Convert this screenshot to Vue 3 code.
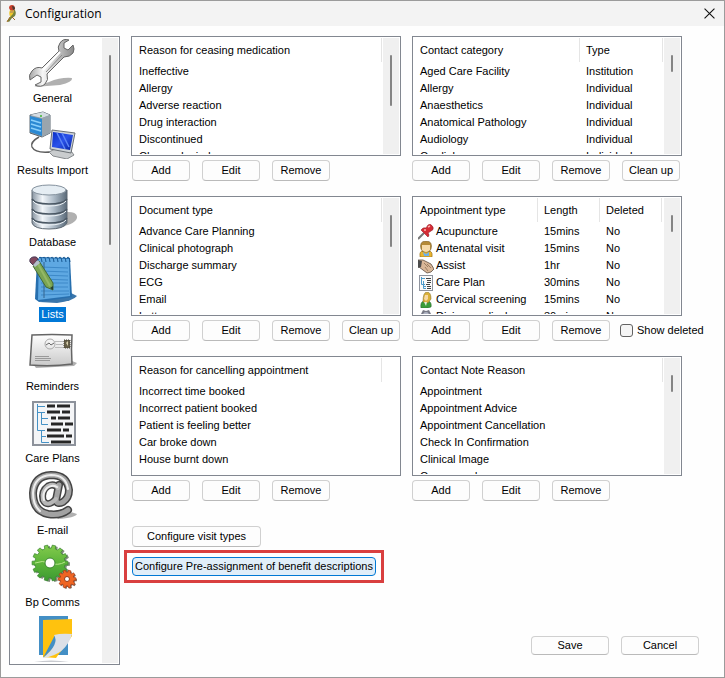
<script setup>
import { ref } from 'vue'

const selected = ref('Lists')
const showDeleted = ref(false)

const sections = ['General', 'Results Import', 'Database', 'Lists', 'Reminders', 'Care Plans', 'E-mail', 'Bp Comms']

const panels = [
  {
    columns: [{ label: 'Reason for ceasing medication', width: 249 }],
    rows: [['Ineffective'], ['Allergy'], ['Adverse reaction'], ['Drug interaction'], ['Discontinued'], ['Changed mind']],
    thumb: 51,
    actions: ['Add', 'Edit', 'Remove'],
  },
  {
    columns: [{ label: 'Contact category', width: 166 }, { label: 'Type', width: 83 }],
    rows: [
      ['Aged Care Facility', 'Institution'],
      ['Allergy', 'Individual'],
      ['Anaesthetics', 'Individual'],
      ['Anatomical Pathology', 'Individual'],
      ['Audiology', 'Individual'],
      ['Cardiology', 'Individual'],
    ],
    thumb: 17,
    actions: ['Add', 'Edit', 'Remove', 'Clean up'],
  },
  {
    columns: [{ label: 'Document type', width: 249 }],
    rows: [['Advance Care Planning'], ['Clinical photograph'], ['Discharge summary'], ['ECG'], ['Email'], ['Letter']],
    thumb: 32,
    actions: ['Add', 'Edit', 'Remove', 'Clean up'],
  },
  {
    columns: [{ label: 'Appointment type', width: 124 }, { label: 'Length', width: 62 }, { label: 'Deleted', width: 62 }],
    rows: [
      ['Acupuncture', '15mins', 'No'],
      ['Antenatal visit', '15mins', 'No'],
      ['Assist', '1hr', 'No'],
      ['Care Plan', '30mins', 'No'],
      ['Cervical screening', '15mins', 'No'],
      ['Diving medical', '30mins', 'No'],
    ],
    icons: ['pin', 'nurse', 'hands', 'plan', 'woman', 'diver'],
    thumb: 17,
    actions: ['Add', 'Edit', 'Remove'],
    deletedToggle: true,
  },
  {
    columns: [{ label: 'Reason for cancelling appointment', width: 249 }],
    rows: [['Incorrect time booked'], ['Incorrect patient booked'], ['Patient is feeling better'], ['Car broke down'], ['House burnt down']],
    thumb: 0,
    actions: ['Add', 'Edit', 'Remove'],
  },
  {
    columns: [{ label: 'Contact Note Reason', width: 249 }],
    rows: [['Appointment'], ['Appointment Advice'], ['Appointment Cancellation'], ['Check In Confirmation'], ['Clinical Image'], ['Correspondence']],
    thumb: 17,
    actions: ['Add', 'Edit', 'Remove'],
  },
]

// Outline of a toothed wheel centred on (cx, cy)
function gear(cx, cy, outer, inner, teeth) {
  const points = []
  for (let i = 0; i < teeth; i++) {
    const steps = [[-0.3, inner], [-0.22, outer], [0.22, outer], [0.3, inner]]
    for (const [offset, radius] of steps) {
      const angle = ((i + offset) / teeth) * Math.PI * 2
      points.push(`${(cx + Math.cos(angle) * radius).toFixed(1)},${(cy + Math.sin(angle) * radius).toFixed(1)}`)
    }
  }
  return points.join(' ')
}
const bigGear = gear(18, 18, 18, 15, 14)
const smallGear = gear(35, 34, 9, 7, 10)
</script>

<template>
  <div class="window">
    <header class="titlebar">
      <svg class="logo" viewBox="0 0 12 17" aria-hidden="true">
        <path d="M4 5L8 4Q10 7 8 11L5 13Q2 9 4 5Z" fill="#f0c92c" />
        <path d="M8 4Q11 7 9 11L6 13L3 17L1 16L5 11Q8 9 8 4Z" fill="#77823c" />
        <path d="M3 3Q3 0 6 0T9 4L7 6L4 5Z" fill="#c8402e" />
        <path d="M6 1Q9 1 9 4L7 5Z" fill="#4b3a34" />
        <path d="M4 6L8 5L7 8L4 8Z" fill="#c9a04c" />
        <path d="M4 12L1 17M6 12L9 15" stroke="#a26b25" fill="none" />
      </svg>
      <h1>Configuration</h1>
      <button class="close" type="button" aria-label="Close">
        <svg viewBox="0 0 10 10"><path d="M0.5 0.5L9.5 9.5M9.5 0.5L0.5 9.5" stroke="#111" fill="none" /></svg>
      </button>
    </header>

    <div class="body">
      <nav class="sidebar">
        <div class="sections">
          <button
            v-for="name in sections"
            :key="name"
            type="button"
            class="section"
            :class="{ active: selected === name }"
            @click="selected = name"
          >
            <svg class="section-icon" viewBox="0 0 48 48" aria-hidden="true">
              <defs>
                <linearGradient id="steel" x1="0" x2="1"><stop offset="0" stop-color="#a5a5a5" /><stop offset=".3" stop-color="#f6f6f6" /><stop offset=".6" stop-color="#cacaca" /><stop offset="1" stop-color="#8a8a8a" /></linearGradient>
                <linearGradient id="drum" x1="0" x2="1"><stop offset="0" stop-color="#8996a3" /><stop offset=".3" stop-color="#f2f6fa" /><stop offset=".6" stop-color="#b3c0cc" /><stop offset="1" stop-color="#5a6a79" /></linearGradient>
                <linearGradient id="paper" x1="0" y1="0" x2="0" y2="1"><stop offset="0" stop-color="#fff" /><stop offset="1" stop-color="#c9c9c9" /></linearGradient>
                <linearGradient id="screen" x1="0" x2="1" y2="1"><stop offset="0" stop-color="#0a2fc4" /><stop offset=".5" stop-color="#2a52ea" /><stop offset="1" stop-color="#0622a0" /></linearGradient>
                <linearGradient id="leaf" x1="0" y1="0" x2="0" y2="1"><stop offset="0" stop-color="#82ca4c" /><stop offset=".5" stop-color="#5cb43a" /><stop offset="1" stop-color="#3c9a32" /></linearGradient>
              </defs>

              <g v-if="name === 'General'">
                <path d="M5 48L20 43Q32 38 43 39Q44 43 31 46Z" fill="#b0b0b0" />
                <path d="M40 1Q34-1 31 4Q28 8 30 12L13 29Q7 27 3 32Q-1 36 1 41L8 36L12 38L12 43L6 46Q12 49 16 45Q20 41 18 35L35 18Q41 18 44 14Q46 10 44 6L39 11L35 9L35 4Z" fill="url(#steel)" stroke="#666" stroke-width="1" />
                <path d="M31 13L14 31" stroke="#fff" stroke-width="2" />
                <path d="M33 16L17 33" stroke="#8d8d8d" stroke-width="1" />
              </g>

              <g v-else-if="name === 'Results Import'">
                <path d="M1 4L14 1L21 4V22L13 26L1 22Z" fill="#8f9da8" stroke="#5a6670" />
                <path d="M1 4L14 1L21 4L13 7Z" fill="#d4dce2" />
                <path d="M13 7L21 4V22L13 26Z" fill="#9aa5ad" />
                <path d="M1 5L13 8V25L1 21Z" fill="#2b89d3" />
                <path d="M2 9L12 12M2 13L12 16M2 17L12 20" stroke="#8bd0fb" stroke-width="1.5" />
                <circle cx="12" cy="5" r="1" fill="#3fb52c" />
                <path d="M10 26Q1 31 3 36Q6 42 20 41L28 42" fill="none" stroke="#5e5e5e" stroke-width="1.5" />
                <path d="M20 41L26 38L42 40L45 44L38 48L24 45Z" fill="#c9ccce" stroke="#85898c" />
                <path d="M23 19L46 22L42 42L21 38Z" fill="#cdd3d8" stroke="#6b7176" />
                <path d="M24 21L44 24L41 39L23 36Z" fill="url(#screen)" />
                <path d="M28 22L36 38M33 22L40 36" stroke="#5d86f6" stroke-width="1.5" />
              </g>

              <g v-else-if="name === 'Database'">
                <path d="M36 29Q49 28 48 35Q45 43 26 44Z" fill="#b0b0b0" />
                <path d="M3 7V40Q5 46 20 46T38 40V7Z" fill="url(#drum)" stroke="#5e6973" stroke-width="1" />
                <path d="M3 16Q6 21 20 21T38 16M3 26Q6 31 20 31T38 26M3 35Q6 40 20 40T38 35" fill="none" stroke="#4a5763" stroke-width="1.5" />
                <path d="M4 18Q7 23 20 23T37 18M4 28Q7 33 20 33T37 28M4 37Q7 42 20 42T37 37" fill="none" stroke="#eef3f7" stroke-width="1" />
                <ellipse cx="20" cy="7" rx="17" ry="5" fill="#e5edf3" stroke="#84919d" />
              </g>

              <g v-else-if="name === 'Lists'">
                <path d="M40 37L48 41Q44 46 28 48L10 47Z" fill="#3a76ab" />
                <path d="M11 2L41 3L43 42L10 47L6 44L8 5Z" fill="#276fae" />
                <path d="M10 3L40 4L41 41L9 45Z" fill="#5ea8e2" />
                <path d="M12 12L39 13M12 16L39 17M12 20L39 21M12 24L39 25M12 28L39 28M12 32L39 32M12 36L40 36M12 40L40 39" stroke="#3c88c8" stroke-width="1" />
                <path d="M15 7V43" stroke="#34658e" />
                <path d="M10 3Q12 0 13 7M14 3Q16 0 17 7M18 3Q20 0 21 7M22 3Q24 0 25 7M26 3Q28 0 29 7M30 3Q32 0 33 7M34 3Q36 0 37 7M38 3Q40 0 41 7" fill="none" stroke="#175892" />
                <path d="M4 11L10 6L24 28L24 35L17 32Z" fill="#7ba553" stroke="#446a37" />
                <path d="M9 9L21 31" stroke="#94b866" stroke-width="2" />
                <path d="M1 7Q0 3 4 2Q8 1 9 4L4 10Z" fill="#80485e" stroke="#4b3c58" />
                <path d="M4 10L9 5L11 8L6 12Z" fill="#b5bfca" />
                <path d="M24 35L21 33L24 31Z" fill="#263f34" />
              </g>

              <g v-else-if="name === 'Reminders'">
                <path d="M4 37L43 34L48 36L45 39L7 41Z" fill="#b0b0b0" />
                <path d="M3 8Q23 7 43 8Q42 22 43 37Q23 40 1 38Q2 23 3 8Z" fill="url(#paper)" stroke="#656565" stroke-width="1.5" />
                <circle cx="21" cy="17" r="5" fill="none" stroke="#aaa" />
                <path d="M17 18L20 16L22 18L25 16" fill="none" stroke="#666" />
                <path d="M26 14.5H34M27 17.5H34M26 20.5H34" stroke="#bbb" />
                <rect x="35" y="13" width="6" height="8" fill="#655e47" stroke="#464238" stroke-dasharray="1 1" />
                <path d="M37 16L39 14V19Z" fill="#d9cfac" />
                <path d="M6 29.5H20M6 31.5H22M6 33.5H21" stroke="#999" />
              </g>

              <g v-else-if="name === 'Care Plans'">
                <rect x="4" y="3" width="42" height="43" fill="#f4f5f7" stroke="#8d929b" stroke-width="2" />
                <path d="M8.5 5V31.5H16M8 7.5H16M8 13.5H16M12.5 13V25.5H19M12 19.5H19M12.5 31V43.5H20M12 37.5H17" fill="none" stroke="#4591c5" />
                <path d="M18 7H26M28 7H41M18 13H31M33 13H41M22 19H27M29 19H41M22 25H34M36 25H44M18 31H32M34 31H40M18 37H35M37 37H43M22 43H42" stroke="#262626" stroke-width="3" />
              </g>

              <g v-else-if="name === 'E-mail'">
                <path d="M24 43Q40 39 48 43Q46 47 29 48Z" fill="#b0b0b0" />
                <g fill="none" stroke-linecap="round">
                  <path d="M30 14L27 29Q28 34 34 31Q40 27 40 19Q38 4 22 4Q5 5 4 22Q4 40 19 43Q31 45 39 39" stroke="#454545" stroke-width="8" />
                  <path d="M29 17Q25 12 19 15Q12 20 14 29Q18 37 27 28" stroke="#454545" stroke-width="7" />
                  <path d="M30 14L27 29Q28 34 34 31Q40 27 40 19Q38 4 22 4Q5 5 4 22Q4 40 19 43Q31 45 39 39" stroke="#a2a2a2" stroke-width="5" />
                  <path d="M29 17Q25 12 19 15Q12 20 14 29Q18 37 27 28" stroke="#b8b8b8" stroke-width="4" />
                  <path d="M39 18Q37 4 22 4Q5 5 4 22Q4 34 11 40M28 16Q23 13 18 17Q13 22 15 29" stroke="#eee" stroke-width="2" />
                </g>
              </g>

              <g v-else>
                <g transform="translate(3 2)">
                  <polygon :points="bigGear" transform="translate(2 1)" fill="#7d8b7a" />
                  <polygon :points="bigGear" fill="url(#leaf)" stroke="#398531" stroke-width=".7" />
                  <path d="M3 18Q10 15 18 18T33 17" fill="none" stroke="#b9e58d" />
                  <circle cx="18" cy="18" r="5" fill="#fff" stroke="#39852f" />
                  <polygon :points="smallGear" transform="translate(1 1)" fill="#80695d" />
                  <polygon :points="smallGear" fill="#ef6523" stroke="#a83c15" stroke-width=".7" />
                  <circle cx="35" cy="34" r="2.5" fill="#fff" stroke="#953a17" />
                </g>
              </g>
            </svg>
            <span class="section-label">{{ name }}</span>
          </button>
          <button type="button" class="section" aria-label="Documents">
            <svg class="section-icon" viewBox="0 0 48 48" aria-hidden="true">
              <path d="M10 1H39V40H10Z" fill="#438fc5" />
              <path d="M14 5L43 4V21L27 43L14 42Z" fill="#ffc20e" />
              <path d="M14 43L26 20L32 26Z" fill="#438fc5" />
              <path d="M43 19Q32 18 25 20Q31 29 14 43Q37 40 43 19Z" fill="#dce0e7" />
              <path d="M5 47Q22 44 40 47Z" fill="#c9cbd0" />
            </svg>
          </button>
        </div>
        <div class="track" aria-hidden="true"><div class="thumb long"></div></div>
      </nav>

      <main class="content">
        <div class="panels">
          <section v-for="panel in panels" :key="panel.columns[0].label" class="panel">
            <div class="listbox">
              <div class="viewport">
                <table>
                  <colgroup>
                    <col v-for="column in panel.columns" :key="column.label" :style="{ width: column.width + 'px' }">
                    <col>
                  </colgroup>
                  <thead>
                    <tr>
                      <th v-for="column in panel.columns" :key="column.label" scope="col"><div class="head">{{ column.label }}</div></th>
                    </tr>
                  </thead>
                  <tbody>
                    <tr v-for="(row, r) in panel.rows" :key="r">
                      <td v-for="(cell, c) in row" :key="c" :class="{ pictured: panel.icons && c === 0 }">
                        <div class="cell">
                          <svg v-if="panel.icons && c === 0" class="row-icon" viewBox="0 0 16 16" aria-hidden="true">
                            <g v-if="panel.icons[r] === 'pin'">
                              <path d="M0 15L6 9" stroke="#777" stroke-width="2" />
                              <path d="M3 6L10 13Q12 11 10 9L13 7Q16 6 15 3Q13-1 10 1L8 4Q5 3 3 6Z" fill="#d52c35" stroke="#95202a" stroke-width=".6" />
                              <path d="M10 3L12 2M6 6L8 6" stroke="#ffafa9" stroke-width="1.5" />
                            </g>
                            <g v-else-if="panel.icons[r] === 'nurse'">
                              <path d="M2 15Q1 11 4 10H12Q15 11 14 16H2Z" fill="#e9b42e" stroke="#906b22" stroke-width=".6" />
                              <path d="M3 8Q1 0 8 0T13 8L11 11H5Z" fill="#b58a37" stroke="#776030" stroke-width=".6" />
                              <path d="M4 4H12V9Q8 13 4 9Z" fill="#f7dbaa" />
                              <path d="M5 11L8 13L11 11L11 15H6Z" fill="#6fb2e8" />
                            </g>
                            <g v-else-if="panel.icons[r] === 'hands'">
                              <path d="M0 2L5 2L13 6L16 11L13 14L9 15L1 9Z" fill="#d9b798" stroke="#5d4b3e" stroke-width=".8" />
                              <path d="M0 2L4 3L3 9L0 10Z" fill="#4c4c4c" />
                              <path d="M6 5L10 9M9 6L13 10M7 9L10 13" stroke="#8d7156" stroke-width=".8" />
                            </g>
                            <g v-else-if="panel.icons[r] === 'plan'">
                              <rect x="1.5" y=".5" width="13" height="15" fill="#fafafa" stroke="#8f949e" />
                              <path d="M3.5 2V9.5H7M3 3.5H7M5.5 6V13.5H8M5 11.5H8" fill="none" stroke="#4c9aca" />
                              <path d="M8 3.5H13M9 5.5H13M9 7.5H13M8 9.5H12M9 11.5H13M9 13.5H13" stroke="#444" />
                            </g>
                            <g v-else-if="panel.icons[r] === 'woman'">
                              <path d="M3 16Q2 10 6 9H10Q14 10 13 15Q8 17 3 16Z" fill="#3b9d38" stroke="#2c682d" stroke-width=".6" />
                              <path d="M5 10Q5 0 9 0T13 7L10 11Z" fill="#dab139" stroke="#8b732c" stroke-width=".6" />
                              <path d="M7 3H10V7L8 9L6 7Z" fill="#f8d9a3" />
                              <path d="M6 10L8 14L9 10Z" fill="#e6f0d9" />
                            </g>
                            <g v-else>
                              <path d="M3 5L5 1L8 2L11 1L13 5V12H3Z" fill="#777985" />
                              <circle cx="8" cy="6" r="3" fill="#b1b5c4" />
                            </g>
                          </svg>
                          <span>{{ cell }}</span>
                        </div>
                      </td>
                    </tr>
                  </tbody>
                </table>
              </div>
              <div v-if="panel.thumb" class="track" aria-hidden="true">
                <div class="thumb" :style="{ height: panel.thumb + 'px' }"></div>
              </div>
            </div>
            <div class="actions">
              <button v-for="action in panel.actions" :key="action" type="button" class="btn">{{ action }}</button>
              <label v-if="panel.deletedToggle" class="toggle">
                <input v-model="showDeleted" type="checkbox">
                <span>Show deleted</span>
              </label>
            </div>
          </section>
        </div>

        <div class="extras">
          <button type="button" class="btn visit">Configure visit types</button>
          <div class="callout">
            <button type="button" class="btn focused">Configure Pre-assignment of benefit descriptions</button>
          </div>
        </div>

        <footer class="footer">
          <button type="button" class="btn wide">Save</button>
          <button type="button" class="btn wide">Cancel</button>
        </footer>
      </main>
    </div>
  </div>
</template>

<style>
body {
  margin: 0;
}
</style>

<style scoped>
* {
  box-sizing: border-box;
}

.window {
  display: flex;
  flex-direction: column;
  height: 100vh;
  min-height: 678px;
  border: 1px solid #9b9b9b;
  background: #fefefe;
  color: #000;
  font: 11px/17px "Liberation Sans", Arial, sans-serif;
}

button {
  font: inherit;
  color: inherit;
}

.titlebar {
  display: flex;
  align-items: center;
  height: 25px;
  padding: 0 9px 0 5px;
  background: #f3f3f3;
}

.logo {
  width: 12px;
  height: 17px;
}

h1 {
  flex: 1;
  margin: 0 0 0 7px;
  font: 12px/16px "Open Sans", "Noto Sans", sans-serif;
}

.close {
  display: flex;
  padding: 0;
  border: 0;
  background: none;
}

.close svg {
  width: 11px;
  height: 11px;
}

.body {
  display: flex;
  flex: 1;
  min-height: 0;
  padding: 10px 0 12px 8px;
}

.sidebar {
  display: flex;
  flex: none;
  width: 111px;
  padding: 1px;
  overflow: hidden;
  border: 1px solid #828790;
  background: #fff;
}

.sections {
  flex: 1;
  min-width: 0;
  padding: 1px 8px 0 0;
}

.section {
  display: flex;
  flex-direction: column;
  align-items: center;
  width: 100%;
  height: 72px;
  padding: 0;
  border: 0;
  background: none;
}

.section-icon {
  flex: none;
  width: 48px;
  height: 48px;
  margin-bottom: 4px;
}

.section-label {
  padding: 0 2px;
  line-height: 15px;
  white-space: nowrap;
}

.active .section-label {
  background: #0078d7;
  color: #fff;
}

.track {
  flex: none;
  width: 16px;
  padding: 17px 7px 0;
  background: #f0f0f0;
}

.thumb {
  width: 2px;
  border-radius: 1px;
  background: #858585;
}

.long {
  height: 190px;
}

.content {
  display: flex;
  flex: 1;
  flex-direction: column;
  min-width: 0;
  padding: 0 25px 0 11px;
}

.panels {
  display: grid;
  grid-template-columns: 1fr 1fr;
  gap: 15px 11px;
  padding-right: 17px;
}

.panel {
  min-width: 0;
}

.listbox {
  display: flex;
  height: 120px;
  padding: 1px;
  border: 1px solid #828790;
  background: #fff;
}

.viewport {
  flex: 1;
  min-width: 0;
  overflow: hidden;
}

table {
  width: 100%;
  table-layout: fixed;
  border-collapse: collapse;
}

th,
td {
  padding: 0;
  font-weight: normal;
  text-align: left;
  white-space: nowrap;
}

.head {
  height: 24px;
  padding-left: 6px;
  border-right: 1px solid #e5e5e5;
  line-height: 24px;
}

.cell {
  display: flex;
  align-items: center;
  height: 17px;
  padding-left: 6px;
}

tbody::before {
  content: "";
  display: block;
  height: 1px;
}

.pictured .cell {
  gap: 2px;
  padding-left: 4px;
}

.row-icon {
  width: 16px;
  height: 16px;
}

.actions {
  display: flex;
  gap: 12px;
  margin-top: 4px;
  padding-left: 1px;
}

.panel:nth-child(even) .actions {
  padding-left: 0;
}

.btn {
  flex: none;
  width: 58px;
  height: 21px;
  padding: 0;
  border: 1px solid #d0d0d0;
  border-bottom-color: #bababa;
  border-radius: 4px;
  background: #fdfdfd;
  white-space: nowrap;
}

.toggle {
  display: flex;
  align-items: center;
  gap: 4px;
  margin-left: -2px;
  white-space: nowrap;
}

.toggle input {
  appearance: none;
  width: 13px;
  height: 13px;
  margin: 0;
  border: 1px solid #626262;
  border-radius: 3px;
  background: #f5f5f5;
}

.toggle input:checked {
  background: #0067c0;
}

.extras {
  display: flex;
  flex-direction: column;
  align-items: flex-start;
  gap: 3px;
  padding: 25px 0 0 1px;
}

.visit {
  width: 129px;
}

.callout {
  margin-left: -8px;
  padding: 4px 5px;
  border: 3px solid #d93f3f;
}

.focused {
  display: block;
  width: 244px;
  height: 19px;
  border-color: #0078d4;
  background: #e0eef9;
}

.footer {
  display: flex;
  justify-content: flex-end;
  gap: 12px;
  margin-top: auto;
  padding-bottom: 10px;
}

.wide {
  width: 78px;
  height: 19px;
}
</style>
